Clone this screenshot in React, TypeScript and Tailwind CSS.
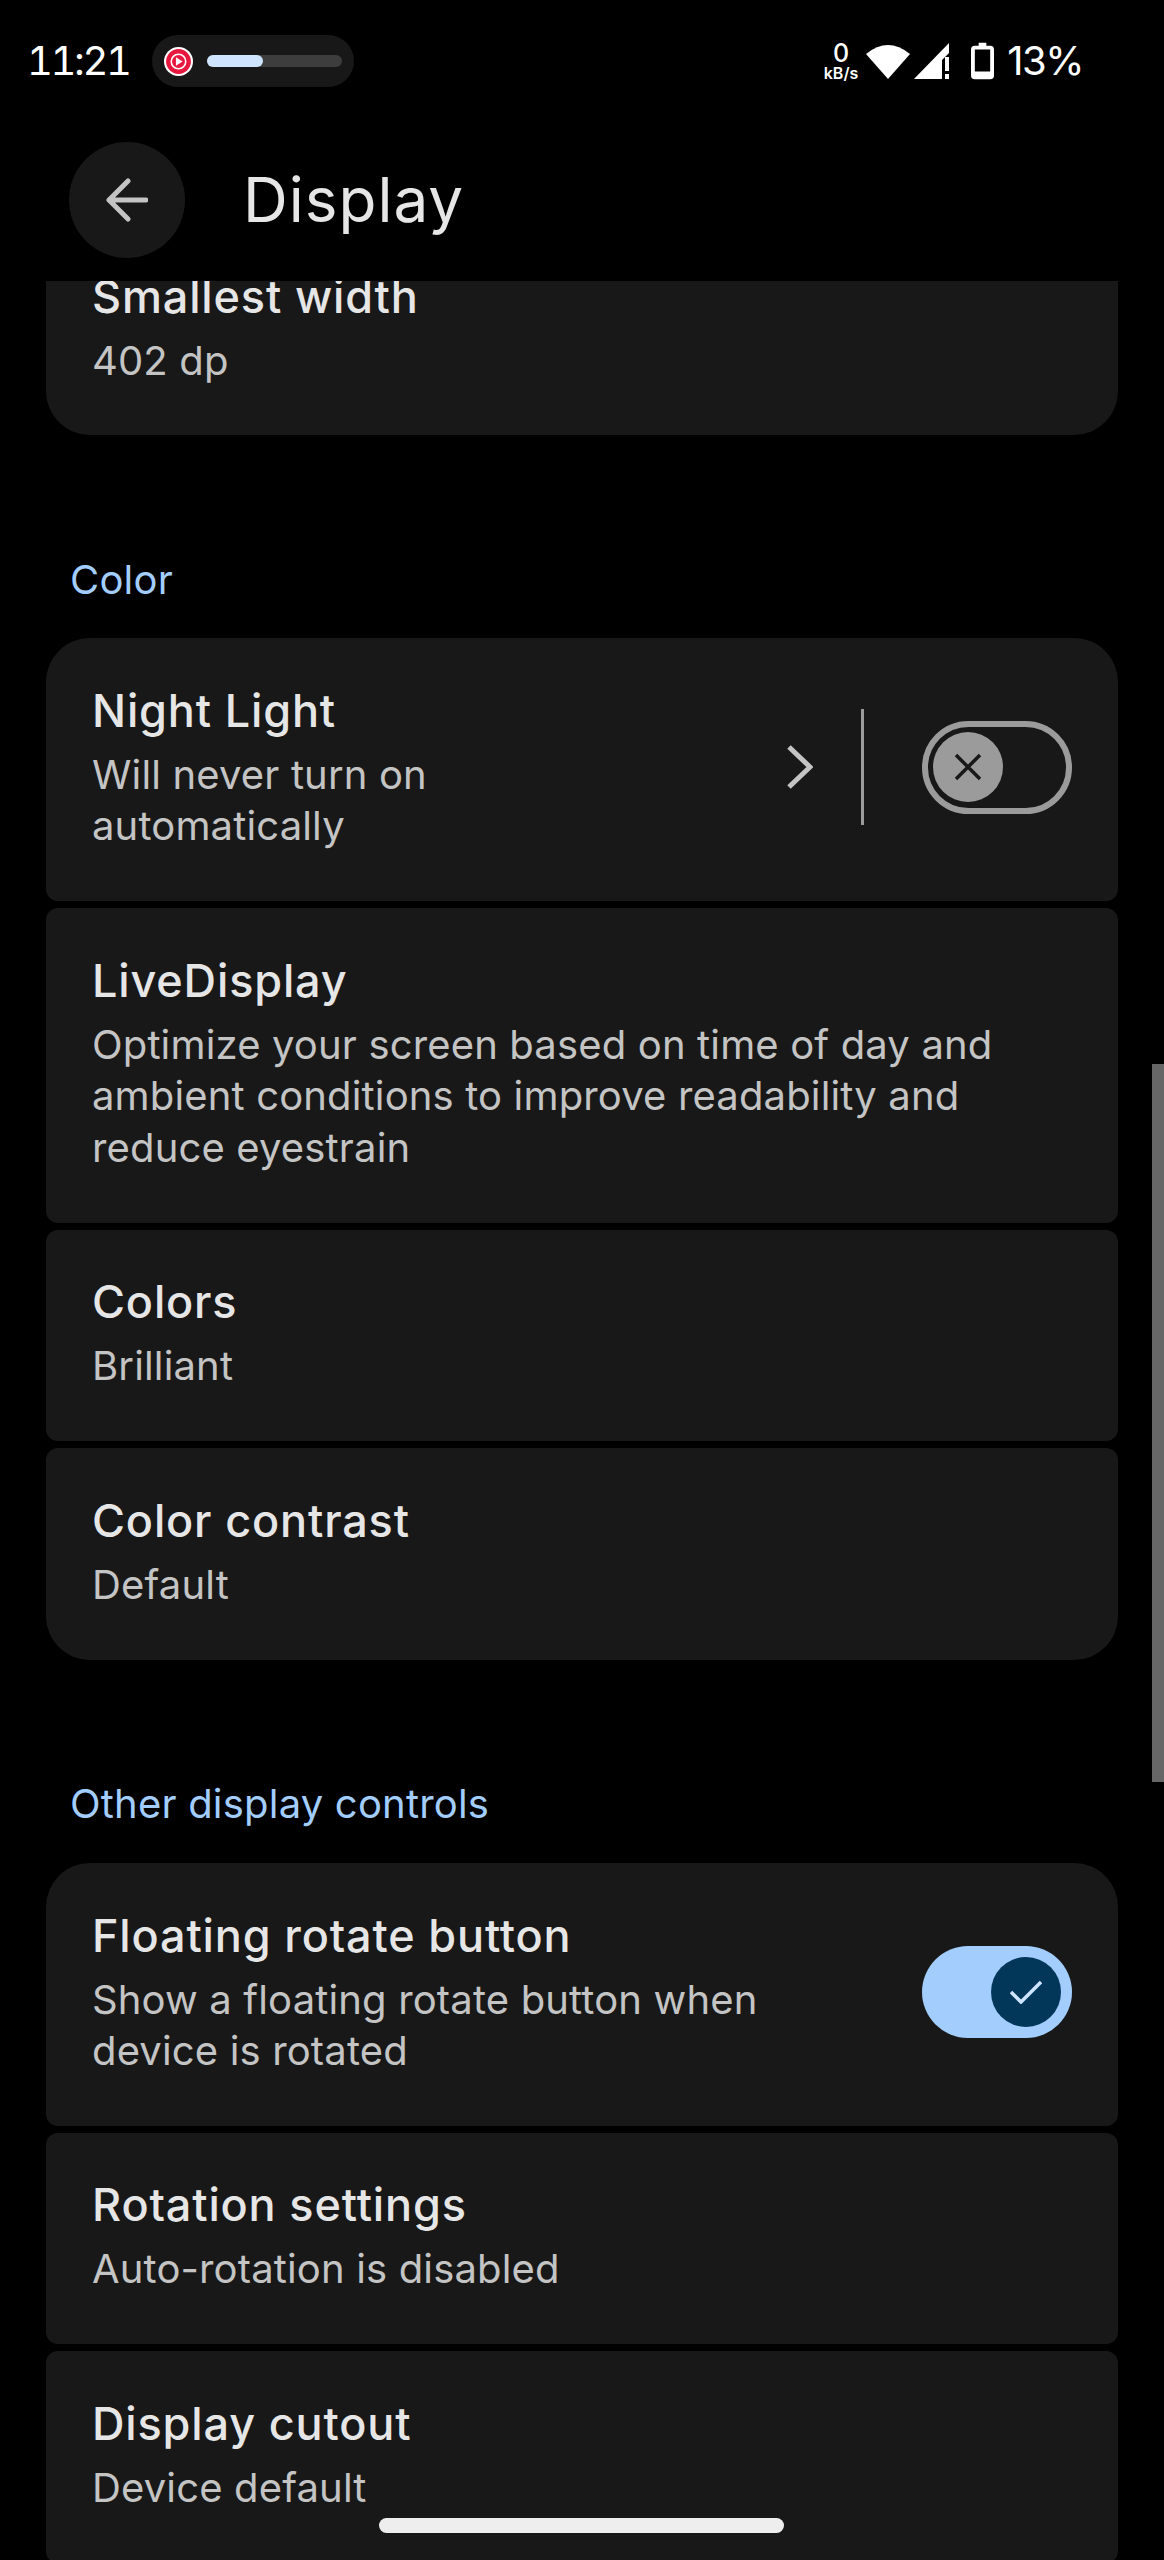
import React from 'react';

const font = { fontFamily: '"Inter", "Noto Sans", sans-serif' };

function Row({ title, sub, className, children }: { title: string; sub: string; className: string; children?: React.ReactNode }) {
	return (
		<div className={`bg-[#181818] flex items-center justify-between pl-[46px] pr-[46px] ${className}`}>
			<div className="pb-[5px]">
				<div className="text-[45px] leading-[56px] mb-[10px] text-[#e6e6e6] font-medium tracking-[0.85px]">{title}</div>
				<div className="text-[40px] leading-[51.5px] text-[#c4c4c4] tracking-[0.15px] whitespace-pre-line">{sub}</div>
			</div>
			{children}
		</div>
	);
}

function OffSwitch() {
	return (
		<div className="w-[150px] h-[93px] rounded-full border-[6px] border-[#9b9b9b] flex items-center pl-[5px] shrink-0">
			<div className="w-[70px] h-[70px] rounded-full bg-[#9b9b9b] flex items-center justify-center">
				<svg width="28" height="28" viewBox="0 0 28 28" stroke="#181818" strokeWidth="3.5" fill="none">
					<path d="M2 2 L26 26 M26 2 L2 26" />
				</svg>
			</div>
		</div>
	);
}

function OnSwitch() {
	return (
		<div className="w-[150px] h-[92px] mb-[5px] rounded-full bg-[#a2cdfd] flex items-center justify-end pr-[11px] shrink-0">
			<div className="w-[70px] h-[70px] rounded-full bg-[#023759] flex items-center justify-center">
				<svg width="32" height="24" viewBox="0 0 32 24" stroke="#cfe5ff" strokeWidth="3.5" fill="none">
					<path d="M1 12 L11 22 L31 2" />
				</svg>
			</div>
		</div>
	);
}

export default function App() {
	return (
		<div className="relative w-[1164px] h-[2560px] overflow-hidden bg-black" style={font}>
			{/* status bar */}
			<div className="h-[122px] flex items-center justify-between pl-[27px] pr-[81px] text-white">
				<div className="flex items-center">
					<span className="text-[40px] leading-none tabular-nums tracking-[-2.4px]">11:21</span>
					<div className="ml-[22px] w-[202px] h-[52px] rounded-full bg-[#181818] flex items-center pl-[12px]">
						<svg width="29" height="29" viewBox="0 0 28 28">
							<circle cx="14" cy="14" r="14" fill="#ffffff" />
							<circle cx="14" cy="14" r="12" fill="#e8173f" />
							<circle cx="14" cy="14" r="7" fill="none" stroke="#fff" strokeWidth="1.5" />
							<path d="M11.5 10 L18 14 L11.5 18 Z" fill="#fff" />
						</svg>
						<div className="ml-[14px] w-[135px] h-[12px] rounded-full bg-[#3d3d3d]">
							<div className="w-[56px] h-[12px] rounded-full bg-[#cfe5ff]" />
						</div>
					</div>
				</div>
				<div className="flex items-center">
					<div className="flex flex-col items-center leading-none font-medium mr-[8px]">
						<span className="text-[25px] leading-[24px]">0</span>
						<span className="text-[16px] leading-[16px] font-semibold">kB/s</span>
					</div>
					<svg width="44" height="36" viewBox="0 0 44 36">
						<path d="M0 11 Q22 -7 44 11 L22 36 Z" fill="#fff" />
					</svg>
					<svg className="ml-[4px]" width="35" height="36" viewBox="0 0 35 36">
						<path d="M0 36 L35 0 V10 L28 17 V36 Z" fill="#fff" />
						<rect x="31" y="14" width="4" height="14" fill="#fff" />
						<rect x="31" y="31" width="4" height="5" fill="#fff" />
					</svg>
					<svg className="ml-[22px]" width="23" height="38" viewBox="0 0 24 38">
						<path d="M8 0 H16 V3 H20 Q24 3 24 7 V34 Q24 38 20 38 H4 Q0 38 0 34 V7 Q0 3 4 3 H8 Z M4 7 V30 H20 V7 Z" fill="#fff" fillRule="evenodd" />
					</svg>
					<span className="ml-[13px] text-[40px] leading-none tracking-[-1.5px]">13%</span>
				</div>
			</div>
			{/* toolbar */}
			<div className="h-[159px] flex items-start pl-[69px]">
				<div className="mt-[20px] w-[116px] h-[116px] rounded-full bg-[#181818] flex items-center justify-center">
					<svg width="42" height="44" viewBox="0 0 42 44" stroke="#c4c4c4" strokeWidth="5" fill="none" strokeLinecap="round" strokeLinejoin="round">
						<path d="M40 22 H3 M22 3 L3 22 L22 41" />
					</svg>
				</div>
				<div className="ml-[58px] mt-[42px] text-[62px] leading-[72px] text-[#e6e6e6] tracking-[1px]">Display</div>
			</div>
			{/* content */}
			<div className="px-[46px]">
				<div className="h-[154px] overflow-hidden rounded-b-[44px] bg-[#181818] px-[46px]">
					<div className="-mt-[12px] mb-[10px] text-[45px] leading-[56px] text-[#e6e6e6] font-medium tracking-[0.85px]">Smallest width</div>
					<div className="text-[40px] leading-[51.5px] text-[#c4c4c4] tracking-[0.15px]">402 dp</div>
				</div>
				<div className="mt-[117px] ml-[24px] h-[68px] text-[40px] leading-[56px] text-[#a2cdfd] tracking-[0.2px]">Color</div>
				<div className="flex flex-col gap-[7px] mt-[18px]">
					<Row title="Night Light" sub={'Will never turn on\nautomatically'} className="h-[263px] rounded-t-[44px] rounded-b-[12px]">
						<div className="flex items-center mb-[5px]">
							<svg width="26" height="44" viewBox="0 0 26 44" stroke="#c4c4c4" strokeWidth="5" fill="none">
								<path d="M2 2 L23 22 L2 42" />
							</svg>
							<div className="ml-[48px] mr-[58px] w-[3px] h-[116px] bg-[#9b9b9b]" />
							<OffSwitch />
						</div>
					</Row>
					<Row title="LiveDisplay" sub={'Optimize your screen based on time of day and\nambient conditions to improve readability and\nreduce eyestrain'} className="h-[315px] rounded-[12px]" />
					<Row title="Colors" sub="Brilliant" className="h-[211px] rounded-[12px]" />
					<Row title="Color contrast" sub="Default" className="h-[212px] rounded-t-[12px] rounded-b-[44px]" />
				</div>
				<div className="mt-[116px] ml-[24px] h-[68px] text-[40px] leading-[56px] text-[#a2cdfd] tracking-[0.2px]">Other display controls</div>
				<div className="flex flex-col gap-[7px] mt-[19px]">
					<Row title="Floating rotate button" sub={'Show a floating rotate button when\ndevice is rotated'} className="h-[263px] rounded-t-[44px] rounded-b-[12px]">
						<OnSwitch />
					</Row>
					<Row title="Rotation settings" sub="Auto-rotation is disabled" className="h-[211px] rounded-[12px]" />
					<Row title="Display cutout" sub="Device default" className="h-[212px] rounded-[12px]" />
				</div>
			</div>
			{/* scrollbar + gesture bar overlays */}
			<div className="absolute right-0 top-[1064px] w-[12px] h-[718px] bg-[#666666]" />
			<div className="absolute left-[379px] top-[2518px] w-[405px] h-[15px] rounded-full bg-[#eeeeee]" />
		</div>
	);
}
